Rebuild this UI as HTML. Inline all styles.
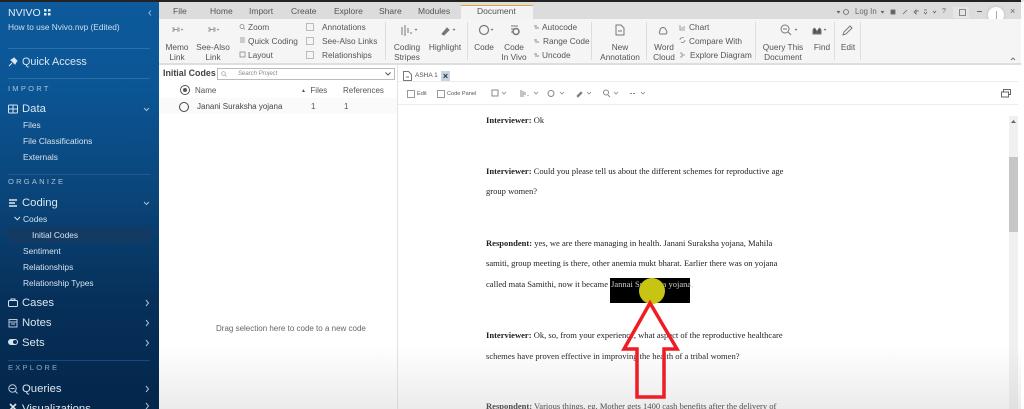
<!DOCTYPE html>
<html><head><meta charset="utf-8">
<style>
html,body{margin:0;padding:0}
body{width:1024px;height:409px;overflow:hidden;position:relative;background:#fff;font-family:"Liberation Sans",sans-serif;color:#444}
#w{position:absolute;left:0;top:0;width:1024px;height:409px;overflow:hidden;filter:blur(.35px)}
#w div{position:absolute;white-space:nowrap}
.s{color:#d6e2ee;font-size:8.4px;line-height:14px}
.h{color:#dbe6f0;font-size:11.3px;line-height:16px}
.c{color:#a9c1d8;font-size:7.6px;letter-spacing:2.2px;line-height:10px}
.r{font-size:8.3px;color:#555;line-height:10px;text-align:center}
.l{font-size:8.3px;color:#555;line-height:11px}
.p{font-size:8px;color:#555;line-height:11px}
.tab{font-size:8.5px;color:#555;line-height:11px}
.d{font-family:"Liberation Serif",serif;font-size:8.55px;color:#222;line-height:11px}
svg{position:absolute;overflow:visible}
</style></head><body><div id="w">

<!-- sidebar -->
<div style="left:0;top:0;width:159px;height:409px;background:linear-gradient(180deg,#0d5a9c 0,#0b5594 90px,#0a4478 200px,#06305a 300px,#04264a 409px)"></div>
<div style="left:0;top:0;width:1024px;height:2px;background:#222"></div>
<div style="left:8px;top:7px;color:#e4edf5;font-size:10.5px;line-height:12px">NVIVO</div>
<svg style="left:44px;top:9px" width="9" height="8"><g fill="#e4edf5"><rect x="0" y="0" width="2.500" height="2.500"/><rect x="4" y="0" width="2.500" height="2.500"/><rect x="0" y="4" width="2.500" height="2.500"/><rect x="4" y="4" width="2.500" height="2.500"/></g></svg>
<svg style="left:148px;top:10px" width="4" height="6"><path d="M3 .5L.8 3 3 5.500" fill="none" stroke="#8fb0cd"/></svg>
<div style="left:8px;top:22px;color:#d0deeb;font-size:8.3px;line-height:11px">How to use Nvivo.nvp (Edited)</div>
<div style="left:8px;top:48px;width:142px;height:1px;background:#2a70ab"></div>
<div style="left:8px;top:78px;width:142px;height:1px;background:#2a6da6"></div>
<svg style="left:8px;top:57px" width="10" height="10"><path d="M1 9l3-3M3 3l4 4 1-2 1-1-3-3-1 1z" fill="#dbe6f0" stroke="#dbe6f0"/></svg>
<div class="h" style="left:22px;top:54px;font-size:10.8px">Quick Access</div>
<div class="c" style="left:8px;top:84px">IMPORT</div>
<svg style="left:8px;top:104px" width="10" height="10"><rect x=".5" y="1" width="9" height="8" rx="1" fill="none" stroke="#d6e2ee"/><path d="M.5 5h9M5 1v8" stroke="#d6e2ee"/></svg>
<div class="h" style="left:22px;top:101px">Data</div>
<svg style="left:143px;top:107px" width="7" height="5"><path d="M1 1l2.500 2.500L6 1" fill="none" stroke="#a9c1d8"/></svg>
<div class="s" style="left:23px;top:118px">Files</div>
<div class="s" style="left:23px;top:134px">File Classifications</div>
<div class="s" style="left:23px;top:150px">Externals</div>
<div style="left:8px;top:174px;width:142px;height:1px;background:#1c5a90"></div>
<div class="c" style="left:8px;top:177px">ORGANIZE</div>
<svg style="left:9px;top:199px" width="9" height="9"><path d="M0 1h8M0 4h6M0 7h8" stroke="#dbe6f0" stroke-width="1.400"/></svg>
<div class="h" style="left:22px;top:195px">Coding</div>
<svg style="left:143px;top:201px" width="7" height="5"><path d="M1 1l2.500 2.500L6 1" fill="none" stroke="#a9c1d8"/></svg>
<svg style="left:14px;top:216px" width="7" height="5"><path d="M.5 1l2.800 2.800L6 1" fill="none" stroke="#d6e2ee"/></svg>
<div class="s" style="left:23px;top:212px">Codes</div>
<div style="left:8px;top:227px;width:143px;height:16px;background:#133a63"></div>
<div class="s" style="left:32px;top:228px">Initial Codes</div>
<div class="s" style="left:23px;top:244px">Sentiment</div>
<div class="s" style="left:23px;top:260px">Relationships</div>
<div class="s" style="left:23px;top:276px">Relationship Types</div>
<svg style="left:8px;top:298px" width="10" height="10"><rect x=".5" y="2.500" width="9" height="6" rx="1" fill="none" stroke="#d6e2ee"/><path d="M3 2.500V1h4v1.500" fill="none" stroke="#d6e2ee"/></svg>
<div class="h" style="left:22px;top:295px">Cases</div>
<svg style="left:8px;top:318px" width="10" height="10"><rect x="1" y="1.500" width="8" height="7.500" fill="none" stroke="#b9cbdc"/><path d="M1 4h8M3 6h4" stroke="#b9cbdc"/></svg>
<div class="h" style="left:22px;top:315px">Notes</div>
<svg style="left:8px;top:338px" width="11" height="8"><rect x="0" y="1" width="10" height="6" rx="3" fill="#d6e2ee"/><circle cx="7" cy="4" r="2" fill="#06305a"/></svg>
<div class="h" style="left:22px;top:335px">Sets</div>
<div style="left:8px;top:360px;width:142px;height:1px;background:#154a7a"></div>
<div class="c" style="left:8px;top:363px;color:#8da8c2">EXPLORE</div>
<svg style="left:8px;top:384px" width="10" height="10"><circle cx="4.500" cy="4.500" r="3.700" fill="none" stroke="#b9cbdc"/><path d="M7 7l2.500 2.500M2.500 4.500h4" stroke="#b9cbdc"/></svg>
<div class="h" style="left:22px;top:381px">Queries</div>
<svg style="left:9px;top:403px" width="9" height="7"><path d="M1 1l6 6M7 1L1 7" stroke="#dbe6f0" stroke-width="1.600"/></svg>
<div class="h" style="left:22px;top:401px">Visualizations</div>
<svg style="left:145px;top:300px" width="5" height="109"><path d="M1 0l2.500 3L1 6M1 20l2.500 3L1 26M1 40l2.500 3L1 46M1 86l2.500 3L1 92M1 103l2.500 3L1 109" fill="none" stroke="#a9c1d8"/></svg>

<!-- tab bar -->
<div style="left:159px;top:2px;width:865px;height:17px;background:#dcdcdc"></div>
<div style="left:461px;top:5px;width:72px;height:15px;background:#f3f3f3;border-top:1.500px solid #e9a23b;box-sizing:border-box"></div>
<div class="tab" style="left:173px;top:6px">File</div>
<div class="tab" style="left:210px;top:6px">Home</div>
<div class="tab" style="left:249px;top:6px">Import</div>
<div class="tab" style="left:291px;top:6px">Create</div>
<div class="tab" style="left:334px;top:6px">Explore</div>
<div class="tab" style="left:379px;top:6px">Share</div>
<div class="tab" style="left:418px;top:6px">Modules</div>
<div class="tab" style="left:477px;top:6px">Document</div>
<svg style="left:836px;top:8px" width="120" height="8"><g fill="none" stroke="#666" stroke-width=".8"><path d="M1 3l1.500 2L4 3" fill="#666"/><circle cx="10" cy="4" r="2.500"/><path d="M45 3l1.500 2L48 3" fill="#666"/><rect x="55" y="2" width="4" height="4" fill="#666"/><path d="M67 6l4-4M78 4l2-2v4zM80 3h3M88 2h3M88 4l1.500 2L91 4M97 3l1.500 2L100 3"/></g></svg>
<div style="left:855px;top:7px;color:#666;font-size:7.800px;line-height:10px">Log In</div>
<div style="left:942px;top:7px;color:#666;font-size:7px;line-height:10px">?</div>
<div style="left:953px;top:7px;width:16px;height:11px;background:#e6e6e6"></div>
<div style="left:959px;top:9px;width:5px;height:5px;border:1px solid #888"></div>
<div style="left:977px;top:11px;width:5px;height:1px;background:#666"></div>
<div style="left:988px;top:7px;width:16px;height:16px;border-radius:50%;background:#fff;box-shadow:0 0 3px #bbb"></div>
<div style="left:996px;top:11px;width:1px;height:9px;background:#aaa"></div>
<div style="left:1010px;top:6px;color:#666;font-size:9px;line-height:10px">×</div>

<!-- ribbon -->
<div style="left:159px;top:19px;width:865px;height:44px;background:#f5f5f5;border-bottom:2px solid #dedede"></div>
<svg style="left:170px;top:25px" width="60" height="12"><g fill="none" stroke="#999"><path d="M3 4.500h5M2 3h2v3H2M7 3h2v3H7M11 4l1 1 1-1"/><path d="M39 4.500h5M38 3h2v3h-2M43 3h2v3h-2M47 4l1 1 1-1"/></g></svg>
<div class="r" style="left:160px;top:42px;width:34px">Memo<br>Link</div>
<div class="r" style="left:193px;top:42px;width:40px">See-Also<br>Link</div>
<div class="l" style="left:248px;top:22px">Zoom</div>
<div class="l" style="left:248px;top:36px">Quick Coding</div>
<div class="l" style="left:248px;top:50px">Layout</div>
<svg style="left:239px;top:24px" width="7" height="34"><g fill="none" stroke="#888" stroke-width=".8"><circle cx="3" cy="2.500" r="2"/><path d="M4.500 4L6 5.500M1 14h5M1 16h5M1 18h5"/><rect x="1" y="28" width="5" height="5"/></g></svg>
<div style="left:306px;top:23px;width:6px;height:6px;border:1px solid #bbb"></div>
<div style="left:306px;top:37px;width:6px;height:6px;border:1px solid #bbb"></div>
<div style="left:306px;top:51px;width:6px;height:6px;border:1px solid #bbb"></div>
<div class="l" style="left:322px;top:22px">Annotations</div>
<div class="l" style="left:322px;top:36px">See-Also Links</div>
<div class="l" style="left:322px;top:50px">Relationships</div>
<div style="left:385px;top:22px;width:1px;height:38px;background:#ddd"></div>
<div style="left:467px;top:22px;width:1px;height:38px;background:#ddd"></div>
<div style="left:591px;top:22px;width:1px;height:38px;background:#ddd"></div>
<div style="left:646px;top:22px;width:1px;height:38px;background:#ddd"></div>
<div style="left:755px;top:22px;width:1px;height:38px;background:#ddd"></div>
<div style="left:834px;top:22px;width:1px;height:38px;background:#ddd"></div>
<div style="left:860px;top:22px;width:1px;height:38px;background:#ddd"></div>
<svg style="left:400px;top:24px" width="460" height="14"><g fill="none" stroke="#777"><path d="M2 3v8M5 1v11M8 4v5M11 8v2M15 5l1 1 1-1"/><path d="M42 10l5-6 2 2-5 5z" fill="#777"/><path d="M53 5l1 1 1-1"/><circle cx="84" cy="6" r="4.500" stroke-width="1.200"/><path d="M91 5l1 1 1-1M111 2h7M111 5h5M111 8h3"/><circle cx="116" cy="7.500" r="3" stroke-width="1.500"/><path d="M216 1h5l3 3v7h-8zM218 7h4"/><path d="M260 7a3 3 0 0 1 6-1 2.500 2.500 0 0 1 0 4h-6a2 2 0 0 1 0-3z"/><circle cx="385" cy="5" r="4"/><path d="M388 8l3 3M383 5h4M395 5l1 1 1-1"/><path d="M415 4a3 3 0 0 0-2 3v3h4V7M419 4a3 3 0 0 1 2 3v3h-4V7" fill="#555"/><path d="M424 5l1 1 1-1"/><path d="M443 11l1-3 6-6 2 2-6 6z"/></g></svg>
<div class="r" style="left:387px;top:42px;width:40px">Coding<br>Stripes</div>
<div class="r" style="left:425px;top:42px;width:40px">Highlight</div>
<div class="r" style="left:469px;top:42px;width:30px">Code</div>
<div class="r" style="left:499px;top:42px;width:30px">Code<br>In Vivo</div>
<div class="l" style="left:542px;top:22px">Autocode</div>
<div class="l" style="left:543px;top:36px">Range Code</div>
<div class="l" style="left:542px;top:50px">Uncode</div>
<svg style="left:533px;top:24px" width="7" height="34"><g fill="none" stroke="#888"><path d="M1 2h3M2 4h4M1 16h3M2 18h4M1 30h3M2 32h4"/></g></svg>
<div class="r" style="left:597px;top:42px;width:46px">New<br>Annotation</div>
<div class="r" style="left:650px;top:42px;width:28px">Word<br>Cloud</div>
<div class="l" style="left:689px;top:22px">Chart</div>
<div class="l" style="left:689px;top:36px">Compare With</div>
<div class="l" style="left:690px;top:50px">Explore Diagram</div>
<svg style="left:679px;top:24px" width="7" height="34"><g fill="none" stroke="#888" stroke-width=".8"><path d="M1 1v5h5M3 5V3M5 5V2"/><path d="M1 16a2.500 2.500 0 0 1 4-2M6 16a2.500 2.500 0 0 1-4 2"/><path d="M1 29h2M1 33h2M3 29v4M3 31h3"/></g></svg>
<div class="r" style="left:760px;top:42px;width:46px">Query This<br>Document</div>
<div class="r" style="left:812px;top:42px;width:20px">Find</div>
<div class="r" style="left:838px;top:42px;width:20px">Edit</div>
<svg style="left:1010px;top:57px" width="6" height="4"><path d="M1 3l2-2 2 2" fill="none" stroke="#777"/></svg>

<!-- codes panel -->
<div style="left:163px;top:67px;font-size:8.900px;font-weight:700;color:#444;line-height:12px">Initial Codes</div>
<div style="left:217px;top:68px;width:176px;height:10px;border:1px solid #bbb;background:#fff"></div>
<svg style="left:221px;top:71px" width="6" height="6"><circle cx="2.500" cy="2.500" r="1.800" fill="none" stroke="#999" stroke-width=".7"/><path d="M4 4l1.500 1.500" stroke="#999" stroke-width=".7"/></svg>
<div style="left:238px;top:69px;font-size:6px;font-style:italic;color:#888;line-height:10px">Search Project</div>
<svg style="left:385px;top:72px" width="6" height="4"><path d="M.5 .5L3 3 5.500 .5" fill="none" stroke="#555"/></svg>
<div style="left:180px;top:85px;width:8px;height:8px;border:1px solid #555;border-radius:50%"></div>
<div style="left:183px;top:88px;width:4px;height:4px;background:#555;border-radius:50%"></div>
<div class="p" style="left:195px;top:85px">Name</div>
<div class="p" style="left:301px;top:85px"><span style="font-size:5px;vertical-align:1px">▲</span>&nbsp; Files</div>
<div class="p" style="left:343px;top:85px">References</div>
<div style="left:159px;top:98px;width:238px;height:16px;background:#fafafa"></div>
<div style="left:179px;top:102px;width:8px;height:8px;border:1px solid #444;border-radius:50%"></div>
<div class="p" style="left:197px;top:101px;color:#444">Janani Suraksha yojana</div>
<div class="p" style="left:311px;top:101px">1</div>
<div class="p" style="left:344px;top:101px">1</div>
<div class="p" style="left:216px;top:323px;color:#666">Drag selection here to code to a new code</div>
<div style="left:397px;top:65px;width:1px;height:344px;background:#e2e2e2"></div>

<!-- doc header -->
<div style="left:398px;top:81px;width:620px;height:1px;background:#ececec"></div>
<div style="left:398px;top:104px;width:620px;height:1px;background:#ececec"></div>
<svg style="left:403px;top:71px" width="9" height="10"><path d="M.5.500h5l3 3v6h-8z" fill="none" stroke="#777"/><path d="M3 6h3" stroke="#777"/></svg>
<div style="left:415px;top:71px;font-size:6.500px;color:#555;line-height:9px">ASHA 1</div>
<div style="left:441px;top:71px;width:9px;height:10px;background:#c8d4e4;color:#234;font-size:9px;line-height:10px;text-align:center;font-weight:700">×</div>
<div style="left:407px;top:90px;width:6px;height:6px;border:1px solid #999"></div>
<div style="left:417px;top:90px;font-size:5.600px;color:#555;line-height:8px">Edit</div>
<div style="left:437px;top:90px;width:6px;height:6px;border:1px solid #999"></div>
<div style="left:447px;top:90px;font-size:5.600px;color:#555;line-height:8px">Code Panel</div>
<svg style="left:490px;top:89px" width="160" height="9"><g fill="none" stroke="#888"><rect x="2" y="1" width="6" height="6"/><path d="M12 3l2 2 2-2" stroke-width=".8"/><path d="M31 1v7M33 2v6M35 3v3M38 6v1"/><path d="M44 3l2 2 2-2" stroke-width=".8"/><circle cx="61" cy="4.500" r="3"/><path d="M70 3l2 2 2-2" stroke-width=".8"/><path d="M87 7l4-4 1 1-4 4z" fill="#666"/><path d="M97 3l2 2 2-2" stroke-width=".8"/><circle cx="116" cy="3.500" r="2.500"/><path d="M118 6l2 2"/><path d="M124 3l2 2 2-2" stroke-width=".8"/><path d="M140 4.500h6" stroke-dasharray="2 1"/><path d="M151 3l2 2 2-2" stroke-width=".8"/></g></svg>
<svg style="left:1001px;top:89px" width="10" height="9"><g fill="none" stroke="#666"><rect x="2.500" y=".5" width="7" height="5"/><rect x=".5" y="3" width="7" height="5" fill="#fff"/></g></svg>

<!-- document text -->
<div class="d" style="left:486px;top:115px"><b>Interviewer:</b> Ok</div>
<div class="d" style="left:486px;top:166px"><b>Interviewer:</b> Could you please tell us about the different schemes for reproductive age</div>
<div class="d" style="left:486px;top:186px">group women?</div>
<div class="d" style="left:486px;top:238px"><b>Respondent:</b> yes, we are there managing in health. Janani Suraksha yojana, Mahila</div>
<div class="d" style="left:486px;top:258px">samiti, group meeting is there, other anemia mukt bharat. Earlier there was on yojana</div>
<div class="d" style="left:486px;top:279px">called mata Samithi, now it became</div>
<div style="left:610px;top:278px;width:80px;height:25px;background:#000"></div>
<div class="d" style="left:611px;top:279px;color:#ccc">Jannai Suraksha yojana,</div>
<div style="left:639px;top:278px;width:26px;height:26px;border-radius:50%;background:#c8c414"></div>
<div class="d" style="left:486px;top:330px"><b>Interviewer:</b> Ok, so, from your experience, what aspect of the reproductive healthcare</div>
<div class="d" style="left:486px;top:351px">schemes have proven effective in improving the health of a tribal women?</div>
<div class="d" style="left:486px;top:401px"><b>Respondent:</b> Various things, eg, Mother gets 1400 cash benefits after the delivery of</div>

<!-- scrollbar -->
<div style="left:1009px;top:116px;width:9px;height:293px;background:#f0f0f0"></div>
<div style="left:1009px;top:157px;width:9px;height:75px;background:#c6c6c6"></div>
<svg style="left:1011px;top:119px" width="5" height="4"><path d="M0 4l2.500-3L5 4z" fill="#666"/></svg>

<!-- bottom fade -->
<div style="left:159px;top:345px;width:865px;height:64px;background:linear-gradient(180deg,rgba(200,200,200,0),rgba(190,190,190,.3))"></div>

<!-- arrow -->
<svg style="left:0;top:0" width="1024" height="409"><path d="M650 303L624 349H637V397H664V349H677Z" fill="none" stroke="#f01c24" stroke-width="3.500" stroke-linejoin="miter"/></svg>
<div style="left:1021px;top:0;width:3px;height:409px;background:rgba(255,255,255,.9)"></div>
</div></body></html>
